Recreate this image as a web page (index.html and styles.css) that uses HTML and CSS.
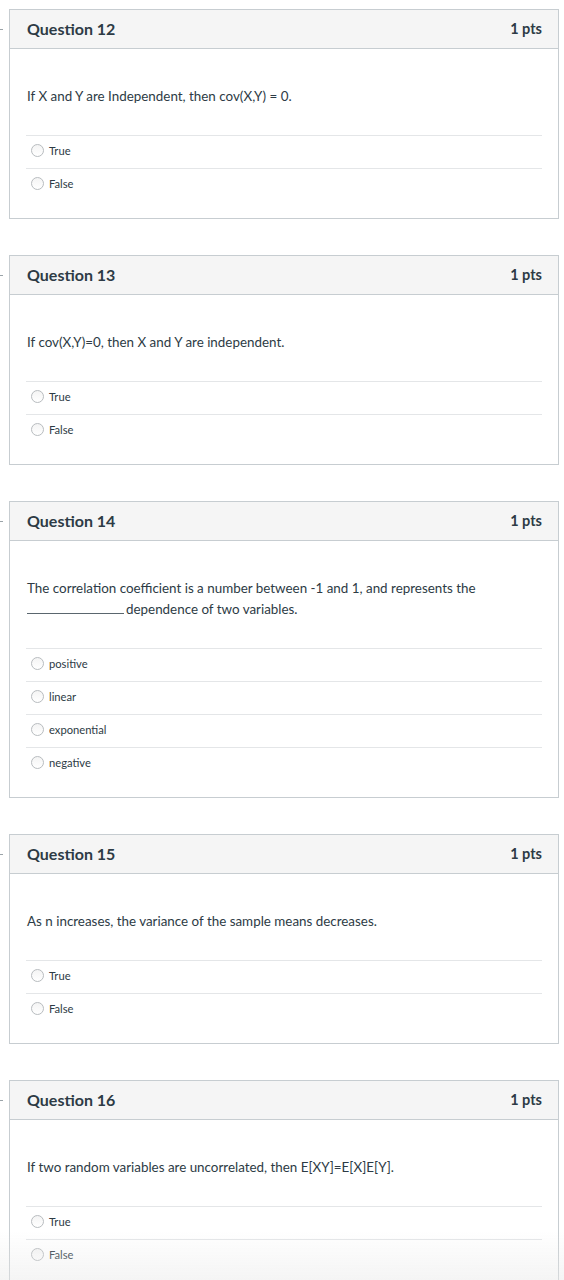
FILE: index.html
```html
<!DOCTYPE html>
<html>
<head>
<meta charset="utf-8">
<link rel="stylesheet" href="styles.css">
</head>
<body>
<div class="page">
  <div class="card">
    <div class="head"><span class="title">Question 12</span><span class="pts">1 pts</span></div>
    <div class="body">
      <p class="q">If X and Y are Independent, then cov(X,Y) = 0.</p>
      <ul class="opts">
        <li><span class="radio"></span>True</li>
        <li><span class="radio"></span>False</li>
      </ul>
    </div>
  </div>
  <div class="card">
    <div class="head"><span class="title">Question 13</span><span class="pts">1 pts</span></div>
    <div class="body">
      <p class="q">If cov(X,Y)=0, then X and Y are independent.</p>
      <ul class="opts">
        <li><span class="radio"></span>True</li>
        <li><span class="radio"></span>False</li>
      </ul>
    </div>
  </div>
  <div class="card">
    <div class="head"><span class="title">Question 14</span><span class="pts">1 pts</span></div>
    <div class="body">
      <p class="q">The correlation coefficient is a number between -1 and 1, and represents the<br><span class="blank"></span>dependence of two variables.</p>
      <ul class="opts">
        <li><span class="radio"></span>positive</li>
        <li><span class="radio"></span>linear</li>
        <li><span class="radio"></span>exponential</li>
        <li><span class="radio"></span>negative</li>
      </ul>
    </div>
  </div>
  <div class="card">
    <div class="head"><span class="title">Question 15</span><span class="pts">1 pts</span></div>
    <div class="body">
      <p class="q">As n increases, the variance of the sample means decreases.</p>
      <ul class="opts">
        <li><span class="radio"></span>True</li>
        <li><span class="radio"></span>False</li>
      </ul>
    </div>
  </div>
  <div class="card">
    <div class="head"><span class="title">Question 16</span><span class="pts">1 pts</span></div>
    <div class="body">
      <p class="q">If two random variables are uncorrelated, then E[XY]=E[X]E[Y].</p>
      <ul class="opts">
        <li><span class="radio"></span>True</li>
        <li><span class="radio"></span>False</li>
      </ul>
    </div>
  </div>
</div>
<div class="fade"></div>
</body>
</html>
```
FILE: styles.css
```css
html, body {
  margin: 0;
  padding: 0;
  background: #ffffff;
}
body {
  font-family: Lato, "Open Sans", sans-serif;
  color: #2d3b45;
}
.page {
  padding: 9px 0 0 9px;
  display: flex;
  flex-direction: column;
  gap: 36px;
}
.card {
  width: 548px;
  border: 1px solid #c7cdd1;
  background: #fff;
}
.head {
  position: relative;
  box-sizing: border-box;
  height: 39px;
  background: #f5f5f5;
  border-bottom: 1px solid #c7cdd1;
  display: flex;
  align-items: center;
  justify-content: space-between;
  padding: 0 16px 2px 17px;
}
.head::before {
  content: "";
  position: absolute;
  left: -10px;
  top: 19px;
  width: 3px;
  height: 1px;
  background: #9aa3a8;
}
.title {
  font-size: 16px;
  font-weight: 700;
}
.pts {
  font-size: 14.5px;
  font-weight: 700;
}
.body {
  padding: 37px 16px 17px 16px;
}
.q {
  margin: 0 0 28px 1px;
  font-size: 13.4px;
  line-height: 21px;
}
.blank {
  display: inline-block;
  width: 97px;
  height: 1px;
  background: #5a666e;
  vertical-align: baseline;
  margin-right: 2px;
}
.opts {
  list-style: none;
  margin: 0;
  padding: 0;
}
.opts li {
  border-top: 1px solid #e4e6e8;
  box-sizing: border-box;
  height: 33px;
  padding-bottom: 3px;
  display: flex;
  align-items: center;
  font-size: 11.2px;
  padding-left: 5px;
}
.radio {
  width: 11px;
  height: 11px;
  border: 1px solid #b8bcbf;
  border-radius: 50%;
  background: linear-gradient(#f4f4f4, #ffffff);
  margin-right: 5px;
  box-sizing: content-box;
}
.fade {
  position: fixed;
  left: 0;
  right: 0;
  bottom: 0;
  height: 50px;
  background: linear-gradient(rgba(240,240,240,0), rgba(232,232,232,0.45));
  pointer-events: none;
}
```
